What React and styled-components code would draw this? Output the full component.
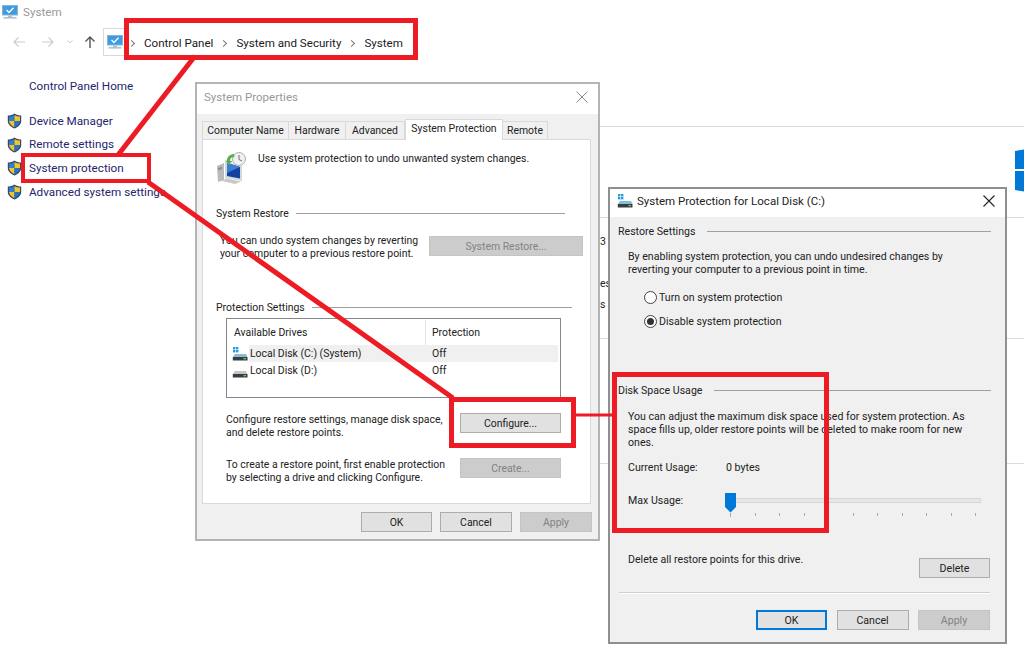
import React from "react";
import styled, { createGlobalStyle } from "styled-components";

const GlobalStyle = createGlobalStyle`
    html, body {
        margin: 0;
        padding: 0;
        background: #fff;
    }
    * {
        box-sizing: border-box;
    }
`;

const FONT = `Roboto, "Open Sans", sans-serif`;
const RED = "#ed1c24";

const Desktop = styled.div`
    position: relative;
    width: 1024px;
    height: 660px;
    overflow: hidden;
    background: #fff;
    font-family: ${FONT};
    font-size: 10.45px;
    line-height: 13px;
    color: #222;
`;

// background control panel page
const TitleBar = styled.div`
    height: 24px;
    display: flex;
    align-items: center;
    gap: 5px;
    padding-left: 2px;
    color: #999;
    font-size: 11.7px;
`;

const NavBar = styled.div`
    height: 36px;
    display: flex;
    align-items: center;
    padding: 0 0 0 13px;
`;

const NavIcon = styled.svg`
    width: ${({ $w }) => $w || 12}px;
    height: 12px;
    margin-right: ${({ $gap }) => $gap || 0}px;
    flex: none;
`;

const AddressBar = styled.div`
    height: 28px;
    width: 24px;
    padding-left: 3px;
    display: flex;
    align-items: center;
    border: 1px solid #d9d9d9;
    border-right: none;
`;

const Crumbs = styled.div`
    display: flex;
    align-items: center;
    padding: 2px 0 0 2px;
    font-size: 11.6px;
    color: #1a1a1a;
`;

const CrumbSep = styled.span`
    width: 5px;
    height: 5px;
    margin: 0 ${({ $after }) => $after || 10}px 0 ${({ $before }) => $before ?? 8}px;
    border-top: 1px solid #777;
    border-right: 1px solid #777;
    transform: rotate(45deg);
    flex: none;
`;

const PageBody = styled.div`
    display: flex;
`;

const Sidebar = styled.div`
    width: 200px;
    padding: 20px 0 0 7px;
    color: #25256b;
    font-size: 11.7px;
`;

const HomeLink = styled.div`
    padding-left: 22px;
    height: 14px;
    margin-bottom: 19px;
`;

const SideLink = styled.div`
    display: flex;
    align-items: center;
    gap: 7px;
    height: 16px;
    margin-bottom: 7.7px;
    white-space: nowrap;
`;

const ContentPane = styled.div`
    flex: 1;
    padding-top: 66px;
    position: relative;
`;

const ContentRow = styled.div`
    height: ${({ $h }) => $h}px;
    border-bottom: 1px solid #dcdcdc;
    padding: ${({ $top }) => $top || 0}px 0 0 400px;
    white-space: pre;
    line-height: 21px;
`;

const WinLogo = styled.svg`
    position: absolute;
    left: 1015px;
    top: 149px;
    width: 12px;
    height: 43px;
`;

// dialogs
const Dialog = styled.div`
    position: absolute;
    left: ${({ $x }) => $x}px;
    top: ${({ $y }) => $y}px;
    width: ${({ $w }) => $w}px;
    height: ${({ $h }) => $h}px;
    background: #f0f0f0;
    border: 2px solid ${({ $border }) => $border};
    font-size: ${({ $size }) => $size}px;
    display: flex;
    flex-direction: column;
`;

const DialogTitle = styled.div`
    height: ${({ $h }) => $h}px;
    flex: none;
    background: #fff;
    display: flex;
    align-items: center;
    gap: ${({ $gap }) => $gap || 5}px;
    padding: 0 10px 4px ${({ $left }) => $left}px;
    font-size: 11.5px;
    color: ${({ $dim }) => ($dim ? "#999" : "#222")};
`;

const CloseIcon = styled.svg`
    width: 12px;
    height: 12px;
    margin-left: auto;
`;

const TabStrip = styled.div`
    display: flex;
    align-items: flex-end;
    height: 25px;
    padding-left: 5px;
`;

const Tab = styled.div`
    width: ${({ $w }) => $w}px;
    height: ${({ $active }) => ($active ? 21 : 18)}px;
    display: flex;
    align-items: center;
    justify-content: center;
    background: ${({ $active }) => ($active ? "#fff" : "#f0f0f0")};
    border: 1px solid #d9d9d9;
    border-left: ${({ $active }) => ($active ? "1px solid #d9d9d9" : "none")};
    border-bottom: none;
    margin-bottom: ${({ $active }) => ($active ? -1 : 0)}px;
    padding-bottom: ${({ $active }) => ($active ? 3 : 0)}px;
    position: relative;
    white-space: nowrap;

    &:first-child {
        border-left: 1px solid #d9d9d9;
    }
`;

const TabPanel = styled.div`
    width: 389px;
    height: 365px;
    margin-left: 5px;
    background: #fff;
    border: 1px solid #d9d9d9;
    padding: 12px 7px 0 13px;
`;

const IntroRow = styled.div`
    display: flex;
    gap: 11px;
    height: 32px;
    padding-left: 1px;
`;

const GroupHead = styled.div`
    display: flex;
    align-items: center;
    gap: ${({ $gap }) => $gap || 7}px;
    height: 14px;
    margin-top: ${({ $top }) => $top}px;
    margin-right: ${({ $right }) => $right || 0}px;
    white-space: nowrap;
`;

const GroupLine = styled.div`
    flex: 1;
    height: 1px;
    background: #a0a0a0;
`;

const SplitRow = styled.div`
    display: flex;
    justify-content: space-between;
    align-items: flex-start;
    margin-top: ${({ $top }) => $top}px;
    padding-left: ${({ $left }) => $left}px;
    padding-right: ${({ $right }) => $right || 0}px;
`;

const Para = styled.div`
    white-space: pre-line;
    padding-left: ${({ $left }) => $left || 0}px;
    margin-top: ${({ $top }) => $top || 0}px;
`;

const Button = styled.div`
    width: ${({ $w }) => $w || 72}px;
    height: 20px;
    flex: none;
    display: flex;
    align-items: center;
    justify-content: center;
    margin-top: ${({ $top }) => $top || 0}px;
    background: ${({ disabled }) => (disabled ? "#cccccc" : "#e1e1e1")};
    border: ${({ $primary }) => ($primary ? "2px solid #0078d7" : "1px solid")};
    border-color: ${({ disabled, $primary }) =>
        $primary ? "#0078d7" : disabled ? "#c4c4c4" : "#adadad"};
    color: ${({ disabled }) => (disabled ? "#838383" : "#222")};
`;

const DriveList = styled.div`
    width: 335px;
    height: 80px;
    margin: 4px 0 0 10px;
    background: #fff;
    border: 1px solid #828790;
    padding: 1px 2px 0 0;
`;

const DriveHeader = styled.div`
    display: flex;
    height: 25px;
    align-items: center;
`;

const HeaderCell = styled.div`
    width: ${({ $w }) => $w}px;
    height: 25px;
    line-height: 26px;
    padding-left: ${({ $left }) => $left}px;
    border-right: ${({ $divider }) => ($divider ? "1px solid #e5e5e5" : "none")};
`;

const DriveRow = styled.div`
    display: flex;
    align-items: center;
    height: 17px;
    padding-left: 5px;
`;

const DriveName = styled.div`
    display: flex;
    flex: 1;
    align-items: center;
    height: 17px;
    padding-left: 1px;
    margin-left: 1px;
    background: ${({ $selected }) => ($selected ? "#f0f0f0" : "transparent")};
`;

const DriveNameText = styled.div`
    width: 182px;
`;

const Footer = styled.div`
    display: flex;
    justify-content: flex-end;
    gap: ${({ $gap }) => $gap || 8}px;
    margin-top: ${({ $top }) => $top}px;
    padding-right: ${({ $right }) => $right}px;
`;

const ConfigBody = styled.div`
    padding: 6px 14px 0 8px;
`;

const RadioRow = styled.div`
    display: flex;
    align-items: center;
    gap: 2px;
    height: 14px;
    padding-left: 26px;
    margin-top: ${({ $top }) => $top}px;
`;

const Radio = styled.span`
    width: 13px;
    height: 13px;
    border-radius: 50%;
    background: #fff;
    border: 1px solid #444;
    display: flex;
    align-items: center;
    justify-content: center;
    flex: none;

    &::after {
        content: "";
        display: ${({ $on }) => ($on ? "block" : "none")};
        width: 7px;
        height: 7px;
        border-radius: 50%;
        background: #333;
    }
`;

const UsageRow = styled.div`
    display: flex;
    height: 14px;
    padding-left: 10px;
    margin-top: ${({ $top }) => $top}px;
`;

const UsageLabel = styled.div`
    width: 98px;
`;

const SliderBox = styled.div`
    position: relative;
    width: 256px;
    height: 26px;
    margin: -1px 0 0 -1px;
`;

const SliderTrack = styled.div`
    height: 5px;
    margin-top: 5px;
    background: #e7e7e7;
    border: 1px solid #d6d6d6;
`;

const SliderThumb = styled.svg`
    position: absolute;
    left: 0;
    top: 0;
    width: 11px;
    height: 20px;
`;

const SliderTicks = styled.div`
    display: flex;
    justify-content: space-between;
    padding: 10px 5px 0 5px;
`;

const Tick = styled.span`
    width: 1px;
    height: ${({ $long }) => ($long ? 4 : 3)}px;
    background: #a8a8a8;
`;

const Separator = styled.div`
    height: 2px;
    margin: ${({ $top }) => $top}px 1px 0 1px;
    background: #cfcfcf;
    border-bottom: 1px solid #fff;
`;

// red annotations
const RedBox = styled.div`
    position: absolute;
    left: ${({ $x }) => $x}px;
    top: ${({ $y }) => $y}px;
    width: ${({ $w }) => $w}px;
    height: ${({ $h }) => $h}px;
    border: ${({ $s }) => $s}px solid ${RED};
`;

const Arrows = styled.svg`
    position: absolute;
    left: 0;
    top: 0;
    width: 1024px;
    height: 660px;
`;

const Svg = styled.svg`
    flex: none;
    display: block;
`;

function Shield() {
    return (
        <Svg width="15" height="16" viewBox="0 0 15 16">
            <path d="M7.5 .5 C5.5 2 3 2.6 .8 2.6 V8 C.8 11.5 4 14 7.5 15.5 C11 14 14.2 11.5 14.2 8 V2.6 C12 2.6 9.5 2 7.5 .5Z" fill="#33486b" />
            <path d="M7.5 2 C6 3 4 3.5 2 3.6 V8 H7.5Z" fill="#2f7fd0" />
            <path d="M7.5 2 C9 3 11 3.5 13 3.6 V8 H7.5Z" fill="#f2c42c" />
            <path d="M2 8 H7.5 V14.2 C5 13 2.2 11 2 8Z" fill="#f2c42c" />
            <path d="M13 8 H7.5 V14.2 C10 13 12.8 11 13 8Z" fill="#2673c4" />
        </Svg>
    );
}

function MonitorIcon({ w = 16, h = 14 }) {
    return (
        <Svg width={w} height={h} viewBox="0 0 16 14">
            <rect x="0.5" y="0.5" width="15" height="9.5" fill="#3d9be0" stroke="#8ab4d6" />
            <path d="M4.5 5 L7 7.5 L11.5 2.8" fill="none" stroke="#fff" strokeWidth="1.3" />
            <rect x="6" y="10.5" width="4" height="1.5" fill="#a9c2d6" />
            <rect x="1.5" y="12" width="13" height="1.6" fill="#a9c2d6" />
        </Svg>
    );
}

function RestoreIcon() {
    return (
        <Svg width="30" height="32" viewBox="0 0 30 32">
            <path d="M0 14 L7 11 V28 L1 30 Z" fill="#b9bcb8" />
            <path d="M1 16 L5 14.5 V17 L1 18.5Z" fill="#8d9288" />
            <path d="M8 9 L25 14 V29 L8 26 Z" fill="#d4d9dc" />
            <path d="M10 11 L23 15 V26.5 L10 24 Z" fill="#12419f" />
            <path d="M10 11 L23 15 L10 21 Z" fill="#3b7ed6" />
            <path d="M9 26.5 L24 29.5 L18 32 L5 29 Z" fill="#c6c9c6" />
            <circle cx="22" cy="7" r="6.5" fill="#eef1f3" stroke="#a9b1b6" />
            <path d="M22 3 V7.5 L25 9" fill="none" stroke="#6d7478" strokeWidth="1" />
            <path d="M17 2 C12 2.5 10 5 10 9 L8 7.5 L11.5 13 L15.5 9 L13 9 C13 6.5 14.5 5 17.5 5 Z" fill="#58b04a" />
        </Svg>
    );
}

function DriveIcon({ system }) {
    return (
        <Svg width="16" height="14" viewBox="0 0 16 14">
            {system && (
                <g fill="#2a9ae0">
                    <rect x="1" y="0" width="2.4" height="2.4" />
                    <rect x="4" y="0" width="2.4" height="2.4" />
                    <rect x="1" y="3" width="2.4" height="2.4" />
                    <rect x="4" y="3" width="2.4" height="2.4" />
                </g>
            )}
            <path d="M3 7 H14 L15.5 10 H.8Z" fill={system ? "#86bcd8" : "#c4c4c4"} />
            <rect x="0.8" y="10" width="14.7" height="3.5" fill="#3a3d40" />
            <rect x="11.5" y="11" width="2.5" height="1.3" fill="#5fd35a" />
        </Svg>
    );
}

const tabs = [
    { label: "Computer Name", w: 87 },
    { label: "Hardware", w: 57 },
    { label: "Advanced", w: 59 },
    { label: "System Protection", w: 98, active: true },
    { label: "Remote", w: 45 },
];

const ticks = [0, 1, 2, 3, 4, 5, 6, 7, 8, 9, 10];

function App() {
    return (
        <Desktop>
            <GlobalStyle />

            <TitleBar>
                <MonitorIcon />
                <span>System</span>
            </TitleBar>
            <NavBar>
                <NavIcon viewBox="0 0 12 12" $gap={17}>
                    <path d="M12 6 H1 M5.5 1.5 L1 6 L5.5 10.5" fill="none" stroke="#ccc" strokeWidth="1.2" />
                </NavIcon>
                <NavIcon viewBox="0 0 12 12" $gap={13}>
                    <path d="M0 6 H11 M6.5 1.5 L11 6 L6.5 10.5" fill="none" stroke="#ccc" strokeWidth="1.2" />
                </NavIcon>
                <NavIcon viewBox="0 0 6 12" $w={6} $gap={11}>
                    <path d="M.5 4.5 L3 7 L5.5 4.5" fill="none" stroke="#ccc" strokeWidth="1" />
                </NavIcon>
                <NavIcon viewBox="0 0 12 12" $gap={7}>
                    <path d="M6 12 V1 M1.5 5.5 L6 1 L10.5 5.5" fill="none" stroke="#555" strokeWidth="1.4" />
                </NavIcon>
                <AddressBar>
                    <MonitorIcon />
                </AddressBar>
                <Crumbs>
                    <CrumbSep $before={0} />
                    <span>Control Panel</span>
                    <CrumbSep />
                    <span>System and Security</span>
                    <CrumbSep />
                    <span>System</span>
                </Crumbs>
            </NavBar>
            <PageBody>
                <Sidebar>
                    <HomeLink>Control Panel Home</HomeLink>
                    <SideLink><Shield />Device Manager</SideLink>
                    <SideLink><Shield />Remote settings</SideLink>
                    <SideLink><Shield />System protection</SideLink>
                    <SideLink><Shield />Advanced system settings</SideLink>
                </Sidebar>
                <ContentPane>
                    <ContentRow $h={1} />
                    <ContentRow $h={91} />
                    <ContentRow $h={121} $top={13}>3{"\n\n"}es{"\n"}s</ContentRow>
                    <ContentRow $h={125} />
                </ContentPane>
            </PageBody>
            <WinLogo viewBox="0 0 12 43">
                <path d="M0 2 L12 0 V20 H0Z M0 22 H12 V43 L0 41Z" fill="#0078d7" />
            </WinLogo>

            <Dialog $x={195} $y={82} $w={405} $h={459} $border="#b4b4b4" $size={10.45}>
                <DialogTitle $h={30} $left={7} $dim>
                    <span>System Properties</span>
                    <CloseIcon viewBox="0 0 12 12">
                        <path d="M.5 .5 L11.5 11.5 M11.5 .5 L.5 11.5" stroke="#8a8a8a" strokeWidth="1" />
                    </CloseIcon>
                </DialogTitle>
                <TabStrip>
                    {tabs.map((tab) => (
                        <Tab key={tab.label} $w={tab.w} $active={tab.active}>{tab.label}</Tab>
                    ))}
                </TabStrip>
                <TabPanel>
                    <IntroRow>
                        <RestoreIcon />
                        <Para>Use system protection to undo unwanted system changes.</Para>
                    </IntroRow>
                    <GroupHead $top={22} $right={18}>System Restore<GroupLine /></GroupHead>
                    <SplitRow $top={14} $left={4}>
                        <Para>{"You can undo system changes by reverting\nyour computer to a previous restore point."}</Para>
                        <Button disabled $w={154} $top={2}>System Restore...</Button>
                    </SplitRow>
                    <GroupHead $top={40} $right={11}>Protection Settings<GroupLine /></GroupHead>
                    <DriveList>
                        <DriveHeader>
                            <HeaderCell $w={199} $left={7} $divider>Available Drives</HeaderCell>
                            <HeaderCell $w={130} $left={6}>Protection</HeaderCell>
                        </DriveHeader>
                        <DriveRow>
                            <DriveIcon system />
                            <DriveName $selected>
                                <DriveNameText>Local Disk (C:) (System)</DriveNameText>
                                <span>Off</span>
                            </DriveName>
                        </DriveRow>
                        <DriveRow>
                            <DriveIcon />
                            <DriveName>
                                <DriveNameText>Local Disk (D:)</DriveNameText>
                                <span>Off</span>
                            </DriveName>
                        </DriveRow>
                    </DriveList>
                    <SplitRow $top={15} $left={10} $right={22}>
                        <Para>{"Configure restore settings, manage disk space,\nand delete restore points."}</Para>
                        <Button $w={101}>Configure...</Button>
                    </SplitRow>
                    <SplitRow $top={19} $left={10} $right={22}>
                        <Para>{"To create a restore point, first enable protection\nby selecting a drive and clicking Configure."}</Para>
                        <Button disabled $w={101}>Create...</Button>
                    </SplitRow>
                </TabPanel>
                <Footer $top={8} $right={6}>
                    <Button $w={71}>OK</Button>
                    <Button>Cancel</Button>
                    <Button disabled>Apply</Button>
                </Footer>
            </Dialog>

            <Dialog $x={608} $y={187} $w={399} $h={457} $border="#8f8f8f" $size={10.6}>
                <DialogTitle $h={28} $left={7} $gap={4}>
                    <DriveIcon system />
                    <span>System Protection for Local Disk (C:)</span>
                    <CloseIcon viewBox="0 0 12 12">
                        <path d="M.5 .5 L11.5 11.5 M11.5 .5 L.5 11.5" stroke="#222" strokeWidth="1.1" />
                    </CloseIcon>
                </DialogTitle>
                <ConfigBody>
                    <GroupHead $top={1} $gap={12}>Restore Settings<GroupLine /></GroupHead>
                    <Para $left={10} $top={12}>{"By enabling system protection, you can undo undesired changes by\nreverting your computer to a previous point in time."}</Para>
                    <RadioRow $top={14}><Radio />Turn on system protection</RadioRow>
                    <RadioRow $top={10}><Radio $on />Disable system protection</RadioRow>
                    <GroupHead $top={55} $gap={12}>Disk Space Usage<GroupLine /></GroupHead>
                    <Para $left={10} $top={13}>{"You can adjust the maximum disk space used for system protection. As\nspace fills up, older restore points will be deleted to make room for new\nones."}</Para>
                    <UsageRow $top={12}>
                        <UsageLabel>Current Usage:</UsageLabel>
                        <span>0 bytes</span>
                    </UsageRow>
                    <UsageRow $top={19}>
                        <UsageLabel>Max Usage:</UsageLabel>
                        <SliderBox>
                            <SliderTrack />
                            <SliderTicks>
                                {ticks.map((t) => <Tick key={t} $long={t === 0} />)}
                            </SliderTicks>
                            <SliderThumb viewBox="0 0 11 20">
                                <path d="M0 0 H11 V14 L5.5 19.5 L0 14Z" fill="#0078d7" />
                            </SliderThumb>
                        </SliderBox>
                    </UsageRow>
                    <SplitRow $top={45} $left={10} $right={1}>
                        <Para>Delete all restore points for this drive.</Para>
                        <Button $w={71} $top={5}>Delete</Button>
                    </SplitRow>
                    <Separator $top={14} />
                    <Footer $top={16} $gap={9.5} $right={1}>
                        <Button $primary $w={71}>OK</Button>
                        <Button>Cancel</Button>
                        <Button disabled>Apply</Button>
                    </Footer>
                </ConfigBody>
            </Dialog>

            <Arrows viewBox="0 0 1024 660">
                <line x1="195" y1="56" x2="118" y2="155" stroke={RED} strokeWidth="5" />
                <line x1="148" y1="182" x2="453" y2="398" stroke={RED} strokeWidth="5" />
                <line x1="576" y1="415" x2="612" y2="415" stroke={RED} strokeWidth="3" />
            </Arrows>
            <RedBox $x={124} $y={18} $w={294} $h={42} $s={5} />
            <RedBox $x={21} $y={153} $w={130} $h={30} $s={4} />
            <RedBox $x={449} $y={397} $w={127} $h={51} $s={5} />
            <RedBox $x={612} $y={372} $w={217} $h={161} $s={5} />
        </Desktop>
    );
}

export default App;
